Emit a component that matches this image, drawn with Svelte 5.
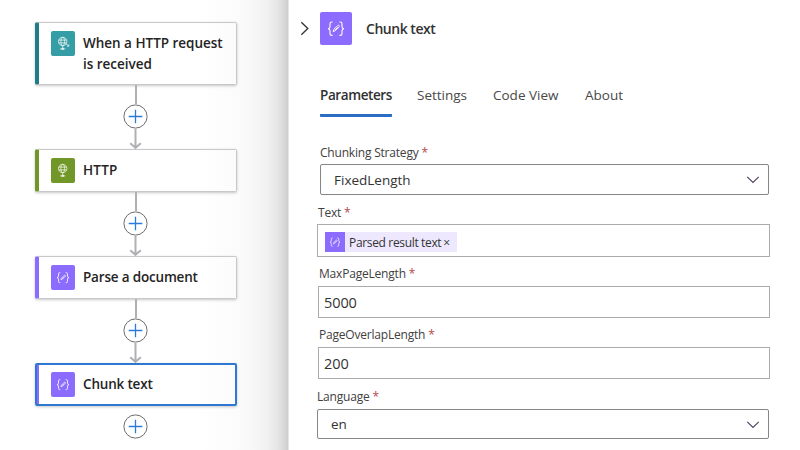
<script>
  const steps = [
    { title: 'When a HTTP request is received', kind: 'request', accent: '#237b86', tile: '#359da5', ls: -0.02, gap: 64 },
    { title: 'HTTP', kind: 'http', accent: '#709727', tile: '#709727', ls: 0.2, gap: 64 },
    { title: 'Parse a document', kind: 'data', accent: '#8c6cff', tile: '#8c6cff', ls: -0.18, gap: 64 },
    { title: 'Chunk text', kind: 'data', accent: '#8c6cff', tile: '#8c6cff', ls: -0.18, selected: true }
  ];
  const tabs = [
    { name: 'Parameters', w: 72 },
    { name: 'Settings', w: 51 },
    { name: 'Code View', w: 67 },
    { name: 'About', w: 39 }
  ];
</script>

{#snippet braces()}
  <svg class="glyph" viewBox="0 0 32 32" fill="none" stroke="#fff" stroke-width="1.1">
    <path d="M12.5 9.5h-.8q-1.7 0-1.7 1.7v3q0 1.8-2 2 2 .2 2 2v3q0 1.7 1.7 1.7h.8M19.5 9.5h.8q1.7 0 1.7 1.7v3q0 1.8 2 2-2 .2-2 2v3q0 1.7-1.7 1.7h-.8" />
    <path d="M13.2 19.2l.7-2.4 3.8-3.8q.8-.6 1.4 0 .6.7 0 1.4l-3.8 3.8zM14.6 17.8l3.2-3.2" stroke-width=".9" />
  </svg>
{/snippet}

{#snippet globe(arrow)}
  <svg class="glyph" viewBox="0 0 24 24" fill="none" stroke="#fff" stroke-width=".8" opacity=".9">
    <circle cx="11.7" cy="10" r="4.2" />
    <ellipse cx="11.7" cy="10" rx="1.9" ry="4.2" />
    <path d="M7.7 8.6h8M7.7 11.4h8M11.7 14.2v3.3M9 17.4h5.4" />
    <path d="M10.6 16.4h2.2v1.9h-2.2z" fill="#fff" stroke="none" />
    {#if arrow}<path d="M14.8 12.2l2.8 2.2M16 14.7h1.8v-1.9" />{/if}
  </svg>
{/snippet}

{#snippet plus()}
  <svg class="plus" width="25" height="25" viewBox="0 0 25 25" fill="none">
    <circle cx="12.5" cy="12.5" r="11.6" fill="#fff" stroke="#6d6d6d" />
    <path d="M12.5 5.7v13.6M5.7 12.5h13.6" stroke="#2b7cd9" stroke-width="1.3" />
  </svg>
{/snippet}

{#snippet chevron()}
  <svg width="14" height="9" viewBox="0 0 14 9" fill="none" stroke="#4f3f60" stroke-width="1.1"><path d="M1.3 1.8L7 7.5l5.7-5.7" /></svg>
{/snippet}

<div class="app">
  <section class="canvas">
    {#each steps as s}
      <article class="card" class:tall={s.kind === 'request'} class:selected={s.selected} style:--accent={s.accent}>
        <span class="tile" style:background={s.tile}>
          {#if s.kind === 'data'}{@render braces()}{:else}{@render globe(s.kind === 'request')}{/if}
        </span>
        <h3 style:letter-spacing="{s.ls}px">{s.title}</h3>
      </article>
      {#if s.gap}
        <div class="link" style:height="{s.gap}px">
          <i class="upper"></i>
          {@render plus()}
          <svg class="arrow" width="13" height="20" viewBox="0 0 13 20" fill="none" stroke="#b0b0b4" stroke-width="2"><path d="M6.5 0v18.5M1.2 14.2l5.3 4.6 5.3-4.6" /></svg>
        </div>
      {/if}
    {/each}
    <div class="last">{@render plus()}</div>
  </section>

  <main class="panel">
    <header>
      <svg width="10" height="15" viewBox="0 0 10 15" fill="none" stroke="#383838" stroke-width="1.4"><path d="M1.3 1.2l6.5 6.3-6.5 6.3" /></svg>
      <span class="tile big">{@render braces()}</span>
      <h2>Chunk text</h2>
    </header>

    <nav>
      {#each tabs as t, i}
        <button class:active={i === 0} style:width="{t.w}px">{t.name}</button>
      {/each}
    </nav>

    <form>
      <div class="field strategy">
        <label for="a">Chunking Strategy <b>*</b></label>
        <div class="box select" id="a"><span>FixedLength</span>{@render chevron()}</div>
      </div>
      <div class="field text">
        <label for="b">Text <b>*</b></label>
        <div class="box" id="b">
          <span class="token"><span class="tile small">{@render braces()}</span><span class="name">Parsed result text</span><span class="x">×</span></span>
        </div>
      </div>
      <div class="field max">
        <label for="c">MaxPageLength <b>*</b></label>
        <div class="box num" id="c">5000</div>
      </div>
      <div class="field overlap">
        <label for="d">PageOverlapLength <b>*</b></label>
        <div class="box num" id="d">200</div>
      </div>
      <div class="field language">
        <label for="e">Language <b>*</b></label>
        <div class="box select" id="e"><span>en</span>{@render chevron()}</div>
      </div>
    </form>
  </main>
</div>

<style>
  * { box-sizing: border-box; }
  .app { display: flex; width: 800px; height: 450px; overflow: hidden; background: #fff; font-family: 'Open Sans', 'Noto Sans', sans-serif; color: #333; }
  .canvas { width: 289px; flex: none; padding: 22px 0 0 35px; display: flex; flex-direction: column; background: linear-gradient(to right, #fff 200px, #fbfbfb 240px, #f7f7f7 254px, #f0f0f0 268px, #e5e5e5 278px, #d6d6d6 285px, #cdcdcd 288px, #e6e6e6 288px); }
  .card { width: 202px; height: 43px; flex: none; display: flex; align-items: flex-start; gap: 8px; padding: 8px 4px 0 12px; background: linear-gradient(to right, #fff 160px, #fbfbfb); border: 1px solid #c8c8c8; border-left: 4px solid var(--accent); border-radius: 2px; box-shadow: 0 1px 3px rgba(0, 0, 0, .22); }
  .card.tall { height: 63px; }
  .card.selected { border: 2px solid #2e78d2; padding: 7px 3px 0 14px; box-shadow: inset 2px 0 var(--accent), 0 1px 3px rgba(0, 0, 0, .22); }
  h3 { margin: 2px 0 0; font-size: 13.5px; line-height: 21px; font-weight: 600; color: #242424; }
  .tile { display: flex; width: 24px; height: 25px; flex: none; border-radius: 2px; background: #8c6cff; }
  .glyph { display: block; width: 100%; height: 100%; }
  .link { width: 201px; flex: none; display: flex; flex-direction: column; align-items: center; }
  .upper { width: 2px; flex: 1; background: #b0b0b4; }
  .plus { display: block; flex: none; }
  .arrow { display: block; flex: none; }
  .last { width: 201px; padding-top: 8px; display: flex; justify-content: center; }
  .panel { flex: 1; background: #fff; }
  header { display: flex; align-items: center; height: 57px; padding-left: 11px; }
  .big { width: 32px; height: 33px; margin-left: 10px; }
  h2 { margin: 0 0 0 14px; font-size: 14px; line-height: 20px; font-weight: 600; letter-spacing: -.48px; color: #333; }
  nav { display: flex; gap: 25px; padding-left: 31px; margin-top: 23px; }
  button { border: 0; padding: 0; height: 37px; background: none; font: 13.5px/31px 'Open Sans', 'Noto Sans', sans-serif; letter-spacing: 0; color: #484848; text-align: left; white-space: nowrap; display: flex; }
  .active { font-weight: 600; color: #303030; letter-spacing: -.4px; background: linear-gradient(#2b6cc4, #2b6cc4) bottom / 100% 3px no-repeat; border-radius: 1px; }
  form { padding-top: 26px; }
  .field { padding-left: 28px; height: 61px; }
  .strategy { padding-left: 31px; height: 60px; }
  label { display: block; height: 21px; line-height: 18px; font-size: 12px; letter-spacing: -.2px; color: #404040; white-space: nowrap; }
  label b { font-weight: 400; color: #b5484d; }
  .strategy label { line-height: 19px; }
  .text { height: 62px; }
  .text label { line-height: 20px; padding-left: 1px; }
  .overlap label, .max label { padding-left: 2px; }
  .overlap { height: 62px; }
  .box { width: 453px; height: 33px; border: 1px solid #ababab; display: flex; align-items: center; font-size: 14px; }
  .select { width: 452px; height: 30px; border-color: #868686; border-radius: 2px; padding: 0 8px 0 13px; justify-content: space-between; font-size: 13.5px; }
  .strategy .box { width: 449px; height: 31px; }
  .num { width: 452px; height: 32px; margin-left: 1px; padding-left: 5px; font-size: 14.5px; letter-spacing: -.1px; }
  .token { display: flex; align-items: center; height: 20px; margin: 3px 0 0 7px; background: #eee8ff; width: 132px; font-size: 12px; }
  .small { width: 20px; height: 20px; border-radius: 0; }
  .name { margin-left: 4px; letter-spacing: -.34px; white-space: nowrap; }
  .x { margin-left: 2px; font-size: 12px; }
</style>
